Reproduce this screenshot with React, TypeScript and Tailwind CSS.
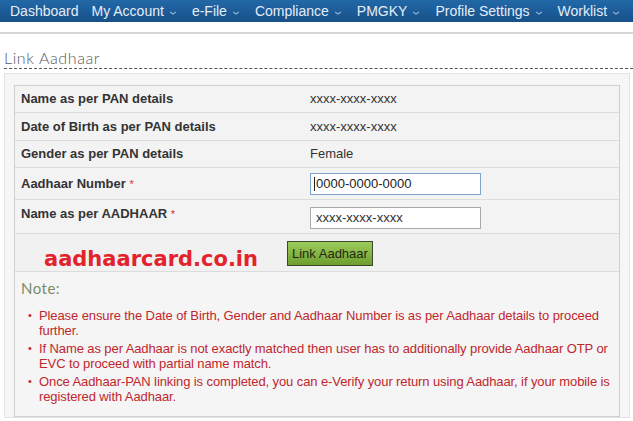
const navItems = [
  { label: 'Dashboard', caret: false },
  { label: 'My Account', caret: true },
  { label: 'e-File', caret: true },
  { label: 'Compliance', caret: true },
  { label: 'PMGKY', caret: true },
  { label: 'Profile Settings', caret: true },
  { label: 'Worklist', caret: true },
];

const notes = [
  'Please ensure the Date of Birth, Gender and Aadhaar Number is as per Aadhaar details to proceed further.',
  'If Name as per Aadhaar is not exactly matched then user has to additionally provide Aadhaar OTP or EVC to proceed with partial name match.',
  'Once Aadhaar-PAN linking is completed, you can e-Verify your return using Aadhaar, if your mobile is registered with Aadhaar.',
];

function Caret() {
  return (
    <svg width="6" height="4" viewBox="0 0 6 4" className="ml-[6px] mt-[4px]">
      <path d="M0 1 L3 3 L6 1" stroke="#8fb0d3" strokeWidth="1.2" fill="none" />
    </svg>
  );
}

export default function App() {
  return (
    <div className="w-[633px] h-[421px] overflow-hidden bg-white [font-family:'Liberation_Sans',Arial,sans-serif]">
      <nav className="h-[22px] flex items-center pl-[4px] bg-gradient-to-b from-[#2268a7] to-[#165089]">
        {navItems.map((item) => (
          <div key={item.label} className="flex items-center whitespace-nowrap px-[6px] mr-[1px] text-[14px] text-[#e4edf7]">
            <span>{item.label}</span>
            {item.caret && <Caret />}
            {item.caret && <span className="w-[3px]" />}
          </div>
        ))}
      </nav>

      <div className="mt-[10px] h-[2px] bg-[#d6d6d6]" />

      <div className="pl-[4px]">
        <div className="pt-[15px] pb-[1px] border-b border-dashed border-[#555] [font-family:'Lato',sans-serif] font-light text-[16px] leading-[18px] text-[#5a5a5a] tracking-[0.6px]">
          Link Aadhaar
        </div>

        <div className="relative mt-[4px] mr-[3px] bg-[#f6f6f6] border border-[#e3e3e3] pt-[11px] px-[9px]">
          <div className="border border-[#cfcfcf] text-[13px] text-[#333]">
            <Row h="h-[27px]" label="Name as per PAN details" value="xxxx-xxxx-xxxx" />
            <Row h="h-[28px]" label="Date of Birth as per PAN details" value="xxxx-xxxx-xxxx" />
            <Row h="h-[27px]" label="Gender as per PAN details" value="Female" />
            <div className="h-[32px] grid grid-cols-[295px_1fr] items-center bg-[#f3f3f3] border-b border-[#dcdcdc]">
              <div className="pl-[6px] font-bold">
                Aadhaar Number <span className="text-[#d0312d] font-normal text-[11px]">*</span>
              </div>
              <div className="h-[22px] w-[171px] border border-[#7fa3cc] bg-white flex items-center pl-[3px] text-[#222]">
                <span className="w-[1px] h-[14px] bg-[#222] mr-[1px]" />
                0000-0000-0000
              </div>
            </div>
            <div className="h-[34px] grid grid-cols-[295px_1fr] items-start pt-[6px] bg-[#f3f3f3] border-b border-[#dcdcdc]">
              <div className="pl-[6px] font-bold leading-[16px]">
                Name as per AADHAAR <span className="text-[#d0312d] font-normal text-[11px]">*</span>
              </div>
              <div className="mt-[1px] h-[22px] w-[171px] border border-[#a9a9a9] bg-white flex items-center pl-[5px] text-[#333]">
                xxxx-xxxx-xxxx
              </div>
            </div>
            <div className="h-[38px] bg-[#f1f1f1] border-b border-[#dcdcdc] pt-[7px] pl-[272px]">
              <button className="h-[25px] px-[4px] border border-[#3a4a2a] bg-gradient-to-b from-[#9ccc5a] to-[#6f9e30] text-[13px] text-[#1e2a12]">
                Link Aadhaar
              </button>
            </div>
            <div className="bg-[#f5f5f5] pt-[7px] pb-[12px]">
              <div className="pl-[6px] [font-family:'Lato',sans-serif] text-[15px] leading-[18px] text-[#7b8b6a] tracking-[0.5px]">
                Note:
              </div>
              <ul className="mt-[11px] pl-[13px] pr-[2px] text-[13px] tracking-[-0.1px] leading-[15px] text-[#c0272d] flex flex-col gap-[3px]">
                {notes.map((n) => (
                  <li key={n} className="flex">
                    <span className="w-[11px] shrink-0 text-[11px]">•</span>
                    <span>{n}</span>
                  </li>
                ))}
              </ul>
            </div>
          </div>
          <div className="absolute left-[39px] top-[173px] text-[21px] leading-[24px] font-bold text-[#e3232b] [font-family:'DejaVu_Sans',sans-serif]">
            aadhaarcard.co.in
          </div>
        </div>
      </div>
    </div>
  );
}

function Row({ h, label, value }: { h: string; label: string; value: string }) {
  return (
    <div className={`${h} grid grid-cols-[295px_1fr] items-center bg-[#f3f3f3] border-b border-[#dcdcdc]`}>
      <div className="pl-[6px] font-bold">{label}</div>
      <div>{value}</div>
    </div>
  );
}
